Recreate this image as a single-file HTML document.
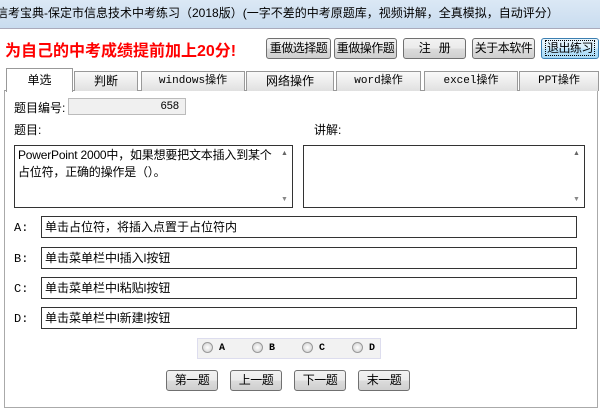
<!DOCTYPE html><html><head><meta charset="utf-8"><style>
body{margin:0;width:600px;height:419px;background:#fff;font-family:"Liberation Sans","Noto Sans CJK SC",sans-serif;font-size:12px;color:#000;position:relative;overflow:hidden}
.a{position:absolute}
.title{left:0;top:0;width:600px;height:28px;background:linear-gradient(#dbe8f5,#c9dcef);font-size:12px;line-height:26px;white-space:nowrap;text-indent:-4px}
.btn{position:absolute;border:1px solid #707070;border-radius:3px;background:linear-gradient(#f2f2f2,#ebebeb 50%,#dcdcdc 51%,#cfcfcf);text-align:center;font-size:12px;box-sizing:border-box;padding:0;white-space:nowrap;letter-spacing:-0.5px}
.tab{position:absolute;top:71px;height:20px;border:1px solid #999;border-bottom:none;background:linear-gradient(#fafafa,#e0e0e0);text-align:center;line-height:19px;box-sizing:border-box;font-size:12px}
.mono{font-family:"Liberation Mono","Noto Sans CJK SC",monospace;font-size:11px}
.box{position:absolute;border:1px solid #333;background:#fff;box-sizing:border-box;padding-left:3px;line-height:20px}
.lab{position:absolute;left:14px;font-size:12px}
.rad{display:inline-block;width:9px;height:9px;border:1px solid #999;border-radius:50%;background:radial-gradient(#fff,#ccc);vertical-align:middle;margin-right:6px}
</style></head><body>
<div class="a title">信考宝典-保定市信息技术中考练习（2018版）(一字不差的中考原题库，视频讲解，全真模拟，自动评分）</div>
<div class="a" style="left:0;top:28px;width:600px;height:1px;background:#aab"></div>
<div class="a" style="left:5px;top:37px;color:#f00;font-size:16px;font-weight:bold">为自己的中考成绩提前加上20分!</div>
<div class="btn" style="left:266px;top:38px;width:65px;height:21px;line-height:19px">重做选择题</div>
<div class="btn" style="left:334px;top:38px;width:63px;height:21px;line-height:19px">重做操作题</div>
<div class="btn" style="left:403px;top:38px;width:63px;height:21px;line-height:19px">注 &nbsp;&nbsp;册</div>
<div class="btn" style="left:472px;top:38px;width:63px;height:21px;line-height:19px">关于本软件</div>
<div class="btn" style="left:541px;top:38px;width:58px;height:21px;line-height:19px;border-color:#3c7fb1;background:linear-gradient(#eaf6fd,#d9f0fc 50%,#bee6fd 51%,#a7d9f5)"><span style="border:1px dotted #000;padding:0 1px">退出练习</span></div>
<div class="a" style="left:4px;top:90px;width:594px;height:318px;border:1px solid #aaa;border-top-color:#999;box-sizing:border-box"></div>
<div class="tab" style="left:6px;top:68px;width:67px;height:24px;background:#fff;line-height:22px">单选</div>
<div class="tab" style="left:74px;width:64px">判断</div>
<div class="tab mono" style="left:141px;width:104px">windows操作</div>
<div class="tab" style="left:246px;width:88px">网络操作</div>
<div class="tab mono" style="left:336px;width:85px">word操作</div>
<div class="tab mono" style="left:424px;width:94px">excel操作</div>
<div class="tab mono" style="left:519px;width:80px">PPT操作</div>
<div class="lab" style="top:99px">题目编号:</div>
<div class="a" style="left:68px;top:98px;width:118px;height:17px;border:1px solid #bbb;background:#f0f0f0;box-sizing:border-box;text-align:right;padding-right:6px;font-size:11px;line-height:15px">658</div>
<div class="lab" style="top:121px">题目:</div>
<div class="a" style="left:314px;top:121px">讲解:</div>
<div class="box" style="left:14px;top:145px;width:279px;height:63px;line-height:17px;padding-top:1px;padding-right:12px;letter-spacing:-0.2px">PowerPoint 2000中，如果想要把文本插入到某个占位符，正确的操作是（）。</div>
<div class="a" style="left:281px;top:150px;font-size:7px;color:#666">▲</div><div class="a" style="left:281px;top:196px;font-size:7px;color:#888">▼</div>
<div class="box" style="left:303px;top:145px;width:282px;height:63px"></div>
<div class="a" style="left:573px;top:150px;font-size:7px;color:#666">▲</div><div class="a" style="left:573px;top:196px;font-size:7px;color:#888">▼</div>
<div class="lab mono" style="top:221px">A:</div><div class="box" style="left:41px;top:216px;width:536px;height:22px">单击占位符，将插入点置于占位符内</div>
<div class="lab mono" style="top:252px">B:</div><div class="box" style="left:41px;top:247px;width:536px;height:22px">单击菜单栏中l插入l按钮</div>
<div class="lab mono" style="top:282px">C:</div><div class="box" style="left:41px;top:277px;width:536px;height:22px">单击菜单栏中l粘贴l按钮</div>
<div class="lab mono" style="top:312px">D:</div><div class="box" style="left:41px;top:307px;width:536px;height:22px">单击菜单栏中l新建l按钮</div>
<div class="a mono" style="left:197px;top:338px;width:184px;height:21px;border:1px solid #dde;background:#f2f2f2;box-sizing:border-box;line-height:19px;padding-left:4px;font-size:10px;font-weight:bold">
<span style="display:inline-block;width:50px"><span class="rad"></span>A</span><span style="display:inline-block;width:50px"><span class="rad"></span>B</span><span style="display:inline-block;width:50px"><span class="rad"></span>C</span><span class="rad"></span>D</div>
<div class="btn" style="left:166px;top:370px;width:52px;height:21px;line-height:19px">第一题</div>
<div class="btn" style="left:230px;top:370px;width:52px;height:21px;line-height:19px">上一题</div>
<div class="btn" style="left:294px;top:370px;width:52px;height:21px;line-height:19px">下一题</div>
<div class="btn" style="left:358px;top:370px;width:52px;height:21px;line-height:19px">末一题</div>
</body></html>
